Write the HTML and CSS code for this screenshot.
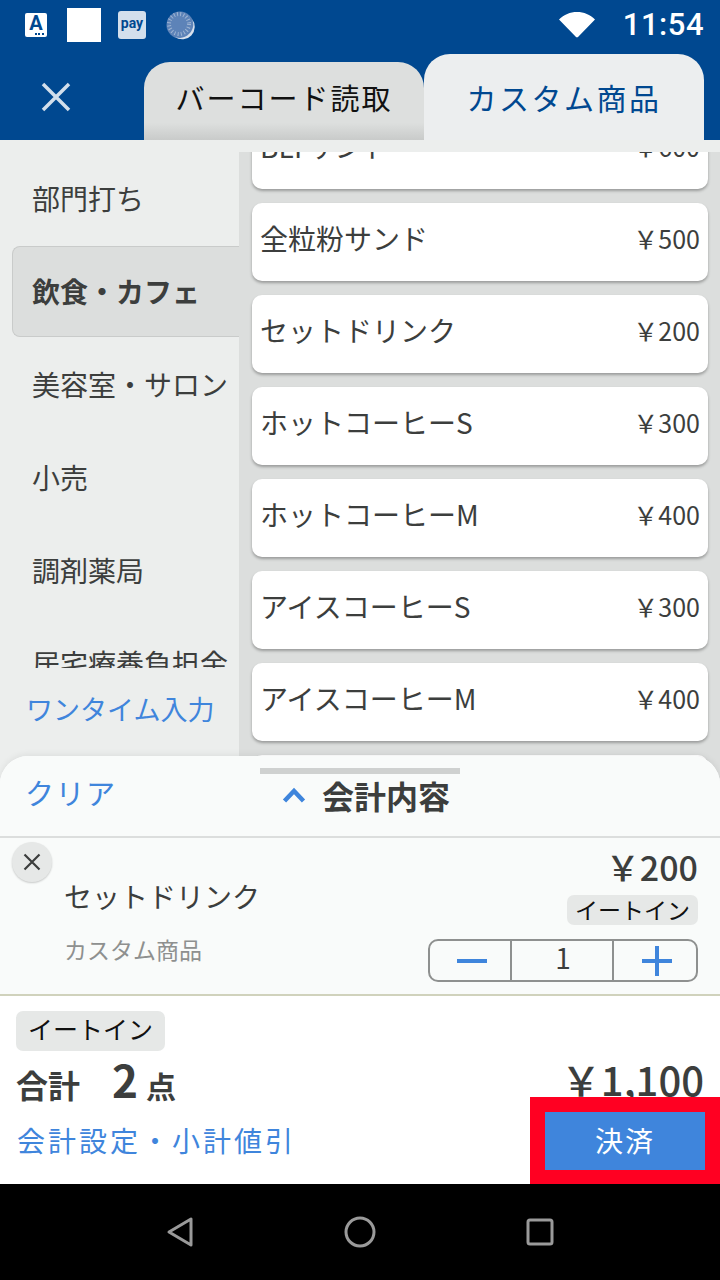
FILE: index.html
```html
<!DOCTYPE html>
<html lang="ja">

<head>
    <meta charset="UTF-8">
    <meta name="viewport" content="width=device-width, initial-scale=1.0">
    <title>カスタム商品</title>
    <link rel="stylesheet" href="styles.css">
</head>

<body>
    <div class="app">
        <div class="status-bar">
            <div class="status-bar__left">
                <span class="status-a">A<i class="status-a__dots"></i></span>
                <span class="status-square"></span>
                <span class="status-pay">pay</span>
                <svg class="status-sync" width="30" height="30" viewBox="0 0 30 30">
                    <circle cx="15" cy="15" r="13.5" fill="#5d83b8" />
                    <path d="M27 9a13.500 13.500 0 0 1-17 18a12.500 12.500 0 0 0 17-18z" fill="#d7e0ec" />
                    <circle cx="14" cy="14" r="10" fill="none" stroke="#9fb5d3" stroke-width="4" stroke-dasharray="1 2.200" />
                </svg>
            </div>
            <div class="status-bar__right">
                <svg width="36" height="28" viewBox="0 0 36 28">
                    <path d="M0 8.500C5 3.500 11 1 18 1s13 2.500 18 7.500L19.500 25.500a2 2 0 0 1-3 0z" fill="#fff" />
                </svg>
                <span class="status-time">11:54</span>
            </div>
        </div>

        <div class="tab-bar">
            <div class="tab-bar__close">
                <svg width="32" height="32" viewBox="0 0 32 32">
                    <path d="M3 3l26 26M29 3L3 29" stroke="#d3dfec" stroke-width="3.500" fill="none" />
                </svg>
            </div>
            <div class="tab">バーコード読取</div>
            <div class="tab tab--active">カスタム商品</div>
        </div>
        <div class="strip"></div>

        <div class="main">
            <div class="side">
                <ul class="side__list">
                    <li class="side__item">部門打ち</li>
                    <li class="side__item side__item--active">飲食・カフェ</li>
                    <li class="side__item">美容室・サロン</li>
                    <li class="side__item">小売</li>
                    <li class="side__item">調剤薬局</li>
                    <li class="side__item">居宅療養負担金</li>
                </ul>
                <div class="side__onetime">ワンタイム入力</div>
            </div>
            <div class="products">
                <div class="products__scroll">
                    <div class="product"><span>BLTサンド</span><span class="product__price">￥600</span></div>
                    <div class="product"><span>全粒粉サンド</span><span class="product__price">￥500</span></div>
                    <div class="product"><span>セットドリンク</span><span class="product__price">￥200</span></div>
                    <div class="product"><span>ホットコーヒーS</span><span class="product__price">￥300</span></div>
                    <div class="product"><span>ホットコーヒーM</span><span class="product__price">￥400</span></div>
                    <div class="product"><span>アイスコーヒーS</span><span class="product__price">￥300</span></div>
                    <div class="product"><span>アイスコーヒーM</span><span class="product__price">￥400</span></div>
                    <div class="product"></div>
                </div>
            </div>
        </div>

        <div class="sheet">
            <div class="sheet__head">
                <span class="sheet__handle"></span>
                <span class="sheet__clear">クリア</span>
                <div class="sheet__title">
                    <svg width="24" height="16" viewBox="0 0 24 16">
                        <path d="M2.500 14L12 4l9.500 10" stroke="#3f85dc" stroke-width="4.500" fill="none" />
                    </svg>
                    <span>会計内容</span>
                </div>
            </div>

            <div class="line">
                <span class="line__remove">
                    <svg width="18" height="18" viewBox="0 0 18 18">
                        <path d="M1.500 1.500l15 15M16.500 1.500l-15 15" stroke="#3c3e3d" stroke-width="2.200" fill="none" />
                    </svg>
                </span>
                <div class="line__info">
                    <div class="line__name">セットドリンク</div>
                    <div class="line__kind">カスタム商品</div>
                </div>
                <div class="line__right">
                    <div class="line__price">￥200</div>
                    <span class="tag tag--small">イートイン</span>
                    <div class="stepper">
                        <span class="stepper__btn">
                            <svg width="30" height="30" viewBox="0 0 30 30"><path d="M0 15h30" stroke="#3f85dc" stroke-width="4" /></svg>
                        </span>
                        <span class="stepper__num">1</span>
                        <span class="stepper__btn stepper__btn--plus">
                            <svg width="30" height="30" viewBox="0 0 30 30"><path d="M0 15h30M15 0v30" stroke="#3f85dc" stroke-width="4" /></svg>
                        </span>
                    </div>
                </div>
            </div>

            <div class="summary">
                <span class="tag">イートイン</span>
                <div class="summary__row">
                    <div class="summary__count"><b>合計</b><b class="summary__num">2</b><b>点</b></div>
                    <div class="summary__total">￥1,100</div>
                </div>
                <div class="summary__link">会計設定・小計値引</div>
                <div class="pay-highlight"><span class="pay-button">決済</span></div>
            </div>
        </div>

        <div class="nav-bar">
            <svg width="28" height="32" viewBox="0 0 28 32">
                <path d="M25 3v26L3 16z" fill="none" stroke="#9a9a9a" stroke-width="3" stroke-linejoin="round" />
            </svg>
            <svg width="32" height="32" viewBox="0 0 32 32">
                <circle cx="16" cy="16" r="14" fill="none" stroke="#9a9a9a" stroke-width="3" />
            </svg>
            <svg width="28" height="28" viewBox="0 0 28 28">
                <rect x="2" y="2" width="24" height="24" rx="2" fill="none" stroke="#9a9a9a" stroke-width="3" />
            </svg>
        </div>
    </div>
</body>

</html>
```

FILE: styles.css
```css
* {
    box-sizing: border-box;
}

body {
    margin: 0;
    font-family: "Noto Sans CJK JP", "Noto Sans", sans-serif;
    color: #3c3e3d;
}

ul {
    margin: 0;
    padding: 0;
    list-style: none;
}

.app {
    width: 720px;
    height: 1280px;
    display: flex;
    flex-direction: column;
    overflow: hidden;
}

/* status bar */
.status-bar {
    height: 54px;
    flex: none;
    background-color: #004890;
    display: flex;
    justify-content: space-between;
    align-items: center;
    padding: 0 16px 5px 25px;
}

.status-bar__left {
    display: flex;
    align-items: center;
}

.status-bar__right {
    display: flex;
    align-items: center;
    gap: 28px;
}

.status-a {
    width: 22px;
    height: 24px;
    background-color: #fff;
    border-radius: 2px;
    color: #004890;
    font: bold 20px/20px "Roboto", sans-serif;
    text-align: center;
    position: relative;
}

.status-a__dots {
    position: absolute;
    right: 3px;
    bottom: 2px;
    width: 9px;
    height: 2px;
    background: repeating-linear-gradient(90deg, #004890 0 2px, #fff 2px 3.500px);
}

.status-square {
    width: 34px;
    height: 34px;
    margin-left: 20px;
    background-color: #fff;
}

.status-pay {
    width: 28px;
    height: 28px;
    margin-left: 17px;
    background-color: #d3dfec;
    border-radius: 3px;
    color: #004890;
    font: bold 14px/24px "Roboto", sans-serif;
    text-align: center;
}

.status-sync {
    margin-left: 19px;
}

.status-time {
    color: #fff;
    font: 500 31px/36px "Roboto", sans-serif;
    letter-spacing: 0.5px;
}

/* tabs */
.tab-bar {
    height: 86px;
    flex: none;
    background-color: #004890;
    display: flex;
    align-items: flex-end;
}

.tab-bar__close {
    width: 144px;
    height: 80px;
    padding: 0 0 6px 40px;
    display: flex;
    align-items: center;
}

.tab {
    width: 280px;
    height: 78px;
    padding-bottom: 9px;
    display: flex;
    align-items: center;
    justify-content: center;
    border-radius: 26px 26px 0 0;
    background: linear-gradient(#dddfde 78%, #c9cbca);
    color: #111;
    font-size: 29px;
    letter-spacing: 2px;
}

.tab--active {
    height: 86px;
    padding: 0 0 1px;
    background: #eceeef;
    color: #004890;
    font-size: 30px;
    letter-spacing: 2.5px;
}

.strip {
    height: 12px;
    flex: none;
    background-color: #eceeed;
}

/* categories + products */
.main {
    flex: 1;
    min-height: 0;
    display: flex;
}

.side {
    width: 239px;
    flex: none;
    background-color: #eceeed;
    display: flex;
    flex-direction: column;
}

.side__list {
    height: 516px;
    flex: none;
    overflow: hidden;
    padding-left: 12px;
}

.side__item {
    height: 93px;
    padding: 0 0 1px 20px;
    display: flex;
    align-items: center;
    font-size: 28px;
    white-space: nowrap;
}

.side__item--active {
    width: 228px;
    height: 91px;
    margin: 1px 0;
    font-weight: bold;
    background-color: #dcdedd;
    border: 1px solid #c9cbca;
    border-right: none;
    border-radius: 8px 0 0 8px;
    padding: 0 0 1px 19px;
}

.side__onetime {
    padding: 21px 0 0 26px;
    color: #3f85dc;
    font-size: 27px;
    line-height: 40px;
}

.products {
    flex: 1;
    min-width: 0;
    background-color: #dcdedd;
    overflow: hidden;
}

.products__scroll {
    margin-top: -41px;
    padding: 0 12px 0 13px;
    display: flex;
    flex-direction: column;
    gap: 14px;
}

.product {
    height: 78px;
    flex: none;
    padding: 0 8px 8px 8px;
    display: flex;
    justify-content: space-between;
    align-items: center;
    background-color: #fff;
    border-radius: 10px;
    box-shadow: 0 2px 3px rgba(0, 0, 0, 0.3);
    font-size: 28px;
}

.product__price {
    font-size: 25px;
}

/* bottom sheet */
.sheet {
    height: 428px;
    flex: none;
    margin-top: -28px;
    position: relative;
    background-color: #fff;
    border-radius: 28px 28px 0 0;
    box-shadow: 0 -2px 6px rgba(0, 0, 0, 0.06);
}

.sheet__head {
    height: 82px;
    position: relative;
    background-color: #f9fbfa;
    border-bottom: 2px solid #dcdedd;
    border-radius: 28px 28px 0 0;
    display: flex;
    align-items: center;
}

.sheet__handle {
    position: absolute;
    left: 260px;
    top: 12px;
    width: 200px;
    height: 6px;
    background-color: #cfd1d0;
}

.sheet__clear {
    margin: 0 0 8px 25px;
    width: 257px;
    color: #3f85dc;
    font-size: 29px;
    letter-spacing: 1.500px;
}

.sheet__title {
    display: flex;
    align-items: center;
    gap: 16px;
    padding-bottom: 2px;
    font-size: 32px;
    font-weight: bold;
}

.line {
    height: 158px;
    position: relative;
    background-color: #f9fbfa;
    border-bottom: 2px solid #d0d2bc;
    display: flex;
    justify-content: space-between;
    padding: 0 22px 0 64px;
}

.line__remove {
    position: absolute;
    left: 12px;
    top: 4px;
    width: 40px;
    height: 40px;
    display: flex;
    align-items: center;
    justify-content: center;
    background-color: #e6e8e7;
    border-radius: 50%;
    box-shadow: 0 1px 2px rgba(0, 0, 0, 0.2);
}

.line__name {
    margin-top: 38px;
    font-size: 28px;
    line-height: 40px;
}

.line__kind {
    margin-top: 18px;
    color: #8e908f;
    font-size: 23px;
    line-height: 30px;
}

.line__right {
    display: flex;
    flex-direction: column;
    align-items: flex-end;
}

.line__price {
    margin-top: 6px;
    font-size: 34px;
    font-weight: 500;
    line-height: 46px;
}

.tag {
    height: 40px;
    padding: 0 12px 6px;
    display: inline-flex;
    align-items: center;
    align-self: flex-start;
    background-color: #e6e8e7;
    border-radius: 7px;
    color: #111;
    font-size: 25px;
}

.tag--small {
    height: 30px;
    margin-top: 5px;
    padding: 0 8px 3px;
    align-self: flex-end;
    font-size: 23px;
}

.stepper {
    width: 270px;
    height: 43px;
    margin-top: 14px;
    display: flex;
    border: 2px solid #8e908f;
    border-radius: 10px;
}

.stepper__btn {
    width: 80px;
    padding-left: 3px;
    display: flex;
    align-items: center;
    justify-content: center;
}

.stepper__btn--plus {
    width: 82px;
    padding-left: 4px;
}

.stepper__num {
    flex: 1;
    padding-left: 2px;
    border-left: 2px solid #8e908f;
    border-right: 2px solid #8e908f;
    text-align: center;
    font-size: 28px;
    line-height: 32px;
}

.summary {
    flex: 1;
    height: 188px;
    position: relative;
    padding: 15px 16px 0;
    background-color: #fff;
    display: flex;
    flex-direction: column;
}

.summary__row {
    height: 62px;
    display: flex;
    justify-content: space-between;
    align-items: center;
}

.summary__count {
    display: flex;
    align-items: baseline;
    padding-bottom: 7px;
    font-size: 32px;
}

.summary__num {
    margin: 0 8px 0 32px;
    font-size: 44px;
}

.summary__count b:last-child {
    font-size: 30px;
}

.summary__total {
    font-size: 40px;
    font-weight: 500;
    line-height: 50px;
    margin-bottom: 6px;
}

.summary__link {
    margin: 7px 0 0 1px;
    color: #3f85dc;
    font-size: 28px;
    letter-spacing: 3px;
    line-height: 40px;
}

/* red marker laid over the pay button */
.pay-highlight {
    position: absolute;
    right: 0;
    bottom: -1px;
    width: 190px;
    height: 88px;
    padding: 15px;
    background-color: #ff0022;
}

.pay-button {
    height: 58px;
    padding-bottom: 2px;
    display: flex;
    align-items: center;
    justify-content: center;
    background-color: #3f85dc;
    color: #fff;
    font-size: 28px;
    letter-spacing: 2px;
}

/* android nav */
.nav-bar {
    height: 96px;
    flex: none;
    position: relative;
    background-color: #000;
    display: flex;
    align-items: center;
    justify-content: center;
    gap: 150px;
}
```
